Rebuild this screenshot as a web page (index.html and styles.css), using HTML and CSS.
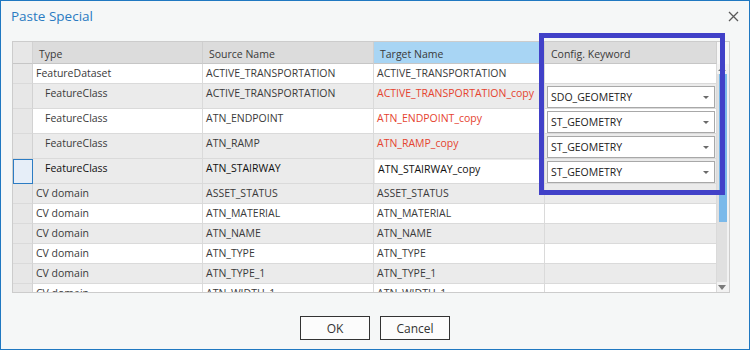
FILE: index.html
```html
<!DOCTYPE html>
<html lang="en">
<head>
  <meta charset="UTF-8">
  <title>Paste Special</title>
  <link rel="stylesheet" href="styles.css">
</head>
<body>
  <div class="dialog">
    <div class="titlebar">
      <span class="title">Paste Special</span>
      <svg class="close" width="11" height="11" viewBox="0 0 11 11">
        <path d="M1 1 L10 10 M10 1 L1 10" stroke="#5a5a5a" stroke-width="1.3" fill="none"/>
      </svg>
    </div>

    <div class="grid">
      <div class="table">
        <div class="row head">
          <div class="cell rh"></div>
          <div class="cell">Type</div>
          <div class="cell">Source Name</div>
          <div class="cell target">Target Name</div>
          <div class="cell">Config. Keyword</div>
        </div>

        <div class="row">
          <div class="cell rh"></div>
          <div class="cell">FeatureDataset</div>
          <div class="cell">ACTIVE_TRANSPORTATION</div>
          <div class="cell">ACTIVE_TRANSPORTATION</div>
          <div class="cell"></div>
        </div>
        <div class="row tall alt">
          <div class="cell rh"></div>
          <div class="cell sub">FeatureClass</div>
          <div class="cell">ACTIVE_TRANSPORTATION</div>
          <div class="cell red">ACTIVE_TRANSPORTATION_copy</div>
          <div class="cell"><div class="combo">SDO_GEOMETRY<span class="arrow"></span></div></div>
        </div>
        <div class="row tall">
          <div class="cell rh"></div>
          <div class="cell sub">FeatureClass</div>
          <div class="cell">ATN_ENDPOINT</div>
          <div class="cell red">ATN_ENDPOINT_copy</div>
          <div class="cell"><div class="combo">ST_GEOMETRY<span class="arrow"></span></div></div>
        </div>
        <div class="row tall alt">
          <div class="cell rh"></div>
          <div class="cell sub">FeatureClass</div>
          <div class="cell">ATN_RAMP</div>
          <div class="cell red">ATN_RAMP_copy</div>
          <div class="cell"><div class="combo">ST_GEOMETRY<span class="arrow"></span></div></div>
        </div>
        <div class="row tall alt selected">
          <div class="cell rh"></div>
          <div class="cell sub">FeatureClass</div>
          <div class="cell">ATN_STAIRWAY</div>
          <div class="cell"><div class="editbox">ATN_STAIRWAY_copy</div></div>
          <div class="cell"><div class="combo">ST_GEOMETRY<span class="arrow"></span></div></div>
        </div>

        <div class="row alt">
          <div class="cell rh"></div>
          <div class="cell">CV domain</div>
          <div class="cell">ASSET_STATUS</div>
          <div class="cell">ASSET_STATUS</div>
          <div class="cell"></div>
        </div>
        <div class="row">
          <div class="cell rh"></div>
          <div class="cell">CV domain</div>
          <div class="cell">ATN_MATERIAL</div>
          <div class="cell">ATN_MATERIAL</div>
          <div class="cell"></div>
        </div>
        <div class="row alt">
          <div class="cell rh"></div>
          <div class="cell">CV domain</div>
          <div class="cell">ATN_NAME</div>
          <div class="cell">ATN_NAME</div>
          <div class="cell"></div>
        </div>
        <div class="row">
          <div class="cell rh"></div>
          <div class="cell">CV domain</div>
          <div class="cell">ATN_TYPE</div>
          <div class="cell">ATN_TYPE</div>
          <div class="cell"></div>
        </div>
        <div class="row alt">
          <div class="cell rh"></div>
          <div class="cell">CV domain</div>
          <div class="cell">ATN_TYPE_1</div>
          <div class="cell">ATN_TYPE_1</div>
          <div class="cell"></div>
        </div>
        <div class="row">
          <div class="cell rh"></div>
          <div class="cell">CV domain</div>
          <div class="cell">ATN_WIDTH_1</div>
          <div class="cell">ATN_WIDTH_1</div>
          <div class="cell"></div>
        </div>
      </div>

      <div class="scrollbar">
        <div class="sb-top"></div>
        <div class="sb-up"><span class="up"></span></div>
        <div class="sb-track"><div class="sb-thumb"></div></div>
        <div class="sb-down"><span class="down"></span></div>
      </div>
    </div>

    <div class="buttons">
      <button class="btn">OK</button>
      <button class="btn">Cancel</button>
    </div>

    <div class="highlight"></div>
  </div>
</body>
</html>
```

FILE: styles.css
```css
body {
  margin: 0;
  font-family: 'Open Sans', 'Noto Sans', sans-serif;
  font-size: 10.5px;
  color: #3a3a3a;
}
.dialog {
  position: relative;
  width: 750px;
  height: 350px;
  box-sizing: border-box;
  border: 1px solid #1f78c1;
  background-color: #f5f7f7;
}
.titlebar {
  display: flex;
  justify-content: space-between;
  align-items: flex-start;
  height: 40px;
  padding: 4px 10px 0 10px;
  box-sizing: border-box;
}
.title {
  font-size: 13.5px;
  line-height: 22px;
  color: #2a7bc2;
}
.close {
  margin-top: 6px;
}
.grid {
  display: flex;
  width: 718px;
  height: 252px;
  margin-left: 11px;
  box-sizing: border-box;
  border: 1px solid #cccccc;
  background-color: #ffffff;
  overflow: hidden;
}
.table {
  width: 704px;
  display: flex;
  flex-direction: column;
}
.row {
  display: grid;
  grid-template-columns: 20px 170px 171px 171px 172px;
  height: 20px;
  flex-shrink: 0;
  background-color: #ffffff;
}
.row.tall {
  height: 25px;
}
.row.alt {
  background-color: #ebebeb;
}
.row.head {
  height: 22px;
  background-color: #dcdcdc;
}
.cell {
  box-sizing: border-box;
  border-right: 1px solid #dadada;
  border-bottom: 1px solid #dadada;
  padding-left: 3px;
  line-height: 19px;
  white-space: nowrap;
  overflow: hidden;
}
.head .cell {
  padding-left: 6px;
  padding-top: 2px;
  line-height: 21px;
  border-bottom-color: #c6c6c6;
  border-right-color: #cfcfcf;
}
.head .cell.target {
  background-color: #a8d5f4;
}
.cell.rh {
  background-color: #e7e7e7;
  border-right-color: #d2d2d2;
  padding: 0;
}
.head .cell.rh {
  background-color: #e7e7e7;
}
.selected .cell.rh {
  background-color: #e6eef8;
  border: 1px solid #2c7cc3;
}
.selected .cell {
  color: #111111;
}
.cell.sub {
  padding-left: 12px;
}
.cell.red {
  color: #e5432f;
}
.combo {
  position: relative;
  margin: 2px 0 0 -1px;
  width: 168px;
  height: 22px;
  box-sizing: border-box;
  border: 1px solid #a8a8a8;
  background-color: #ffffff;
  padding-left: 3px;
  line-height: 20px;
  color: #222222;
}
.arrow {
  position: absolute;
  right: 5px;
  top: 9px;
  border-left: 3px solid transparent;
  border-right: 3px solid transparent;
  border-top: 3px solid #6a6a6a;
}
.editbox {
  margin: 1px 0 0 -2px;
  width: 169px;
  height: 23px;
  background-color: #ffffff;
  padding-left: 3px;
  line-height: 18px;
  color: #111111;
}
.scrollbar {
  width: 12px;
  display: flex;
  flex-direction: column;
  background-color: #f2f2f2;
}
.sb-top {
  height: 22px;
  background-color: #f7f7f7;
}
.sb-up, .sb-down {
  height: 10px;
  display: flex;
  justify-content: center;
  align-items: center;
  width: 10px;
}
.sb-track {
  flex: 1;
  width: 10px;
  background-color: #e0e0e0;
}
.sb-thumb {
  width: 8px;
  margin-left: 2px;
  height: 148px;
  background-color: #7ab9ea;
}
.up {
  border-left: 4px solid transparent;
  border-right: 4px solid transparent;
  border-bottom: 4px solid #7a7a7a;
}
.down {
  border-left: 4px solid transparent;
  border-right: 4px solid transparent;
  border-top: 5px solid #7a7a7a;
}
.buttons {
  display: flex;
  justify-content: center;
  gap: 10px;
  margin-top: 23px;
}
.btn {
  width: 70px;
  height: 24px;
  border: 1px solid #333333;
  background-color: #fcfcfc;
  font-family: 'Open Sans', 'Noto Sans', sans-serif;
  font-size: 12px;
  color: #333333;
  padding: 0;
}
.highlight {
  position: absolute;
  left: 538px;
  top: 32px;
  width: 186px;
  height: 162px;
  box-sizing: border-box;
  border: 5px solid #4141c8;
}
```
